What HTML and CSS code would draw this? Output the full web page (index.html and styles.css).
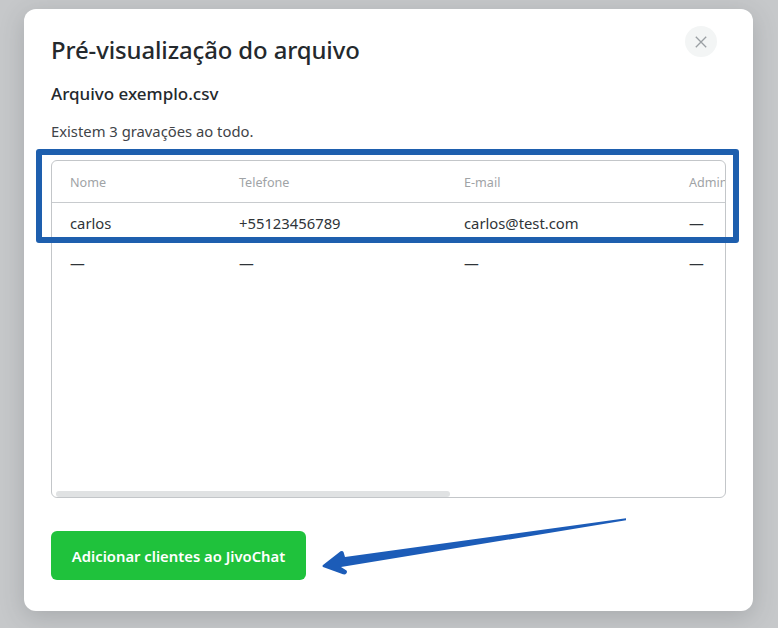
FILE: index.html
```html
<!DOCTYPE html>
<html lang="pt-BR">
<head>
<meta charset="utf-8">
<title>Pré-visualização do arquivo</title>
<link rel="stylesheet" href="styles.css">
</head>
<body>
<main class="modal">
  <button class="close" aria-label="Fechar">
    <svg width="12" height="12" viewBox="0 0 12 12"><path d="M.8.8l10.4 10.4M11.2.8L.8 11.2" fill="none" stroke="#9a9fa3" stroke-width="1.3"/></svg>
  </button>
  <h1 class="title">Pré-visualização do arquivo</h1>
  <h2 class="file">Arquivo exemplo.csv</h2>
  <p class="count">Existem 3 gravações ao todo.</p>
  <div class="frame">
    <div class="row head"><span>Nome</span><span>Telefone</span><span>E-mail</span><span>Admin</span></div>
    <div class="row"><span>carlos</span><span>+55123456789</span><span>carlos@test.com</span><span>—</span></div>
    <div class="row"><span>—</span><span>—</span><span>—</span><span>—</span></div>
    <div class="scrollbar"></div>
  </div>
  <button class="cta">Adicionar clientes ao JivoChat</button>
</main>
<div class="mark"></div>
<svg class="arrow" width="778" height="628" viewBox="0 0 778 628"><path d="M626 518.300L626 520.300L341 567L346.500 570.500Q348 573 345 574.500L343 574.200L323 567Q322 566 323 565L339 552.500Q342 550 343.500 552L345 557Z" fill="#1c5cb8"/></svg>
</body>
</html>
```
FILE: styles.css
```css
* { box-sizing: border-box; }
html, body { margin: 0; height: 628px; overflow: hidden; }
body { background: #c6c8ca; font-family: "Noto Sans", "Open Sans", sans-serif; color: #24292d; position: relative; padding: 9px 25px 0 24px; }
.modal { position: relative; height: 602px; background: #fff; border-radius: 12px; padding: 22px 27px 0; box-shadow: 0 6px 24px rgba(60,64,67,.22); }
.close { position: absolute; top: 17px; right: 36px; width: 32px; height: 31px; border: 0; border-radius: 50%; background: #f3f5f5; padding: 0; display: flex; align-items: center; justify-content: center; }
.title { margin: 0; font-size: 23.900px; line-height: 38px; font-weight: 500; letter-spacing: -.1px; }
.file { margin: 13px 0 0; font-size: 17px; line-height: 24px; font-weight: 500; }
.count { margin: 15px 0 0; font-size: 14.800px; line-height: 20px; color: #3f4448; }
.frame { position: relative; width: 675px; height: 338px; margin-top: 19px; border: 1px solid #c3c6c9; border-radius: 6px; overflow: hidden; }
.row { display: grid; grid-template-columns: 18px 169px 225px 225px 225px; height: 40px; align-items: center; font-size: 14.800px; white-space: nowrap; color: #2f3438; }
.row::before { content: ""; }
.head { height: 42px; padding-top: 1px; color: #a0a3a6; font-size: 12.600px; border-bottom: 1px solid #c8cbce; }
.scrollbar { position: absolute; left: 4px; bottom: 0; width: 394px; height: 6px; border-radius: 3px; background: #e0e2e3; }
.cta { display: block; margin-top: 33px; width: 255px; height: 49px; border: 0; border-radius: 6px; background: #1fc23c; color: #fff; font: 600 14.800px/20px "Noto Sans", "Open Sans", sans-serif; }
.mark { position: absolute; left: 36px; top: 149px; width: 703px; height: 94px; border: 6px solid #1e5fae; border-radius: 3px; }
.arrow { position: absolute; left: 0; top: 0; }
```
